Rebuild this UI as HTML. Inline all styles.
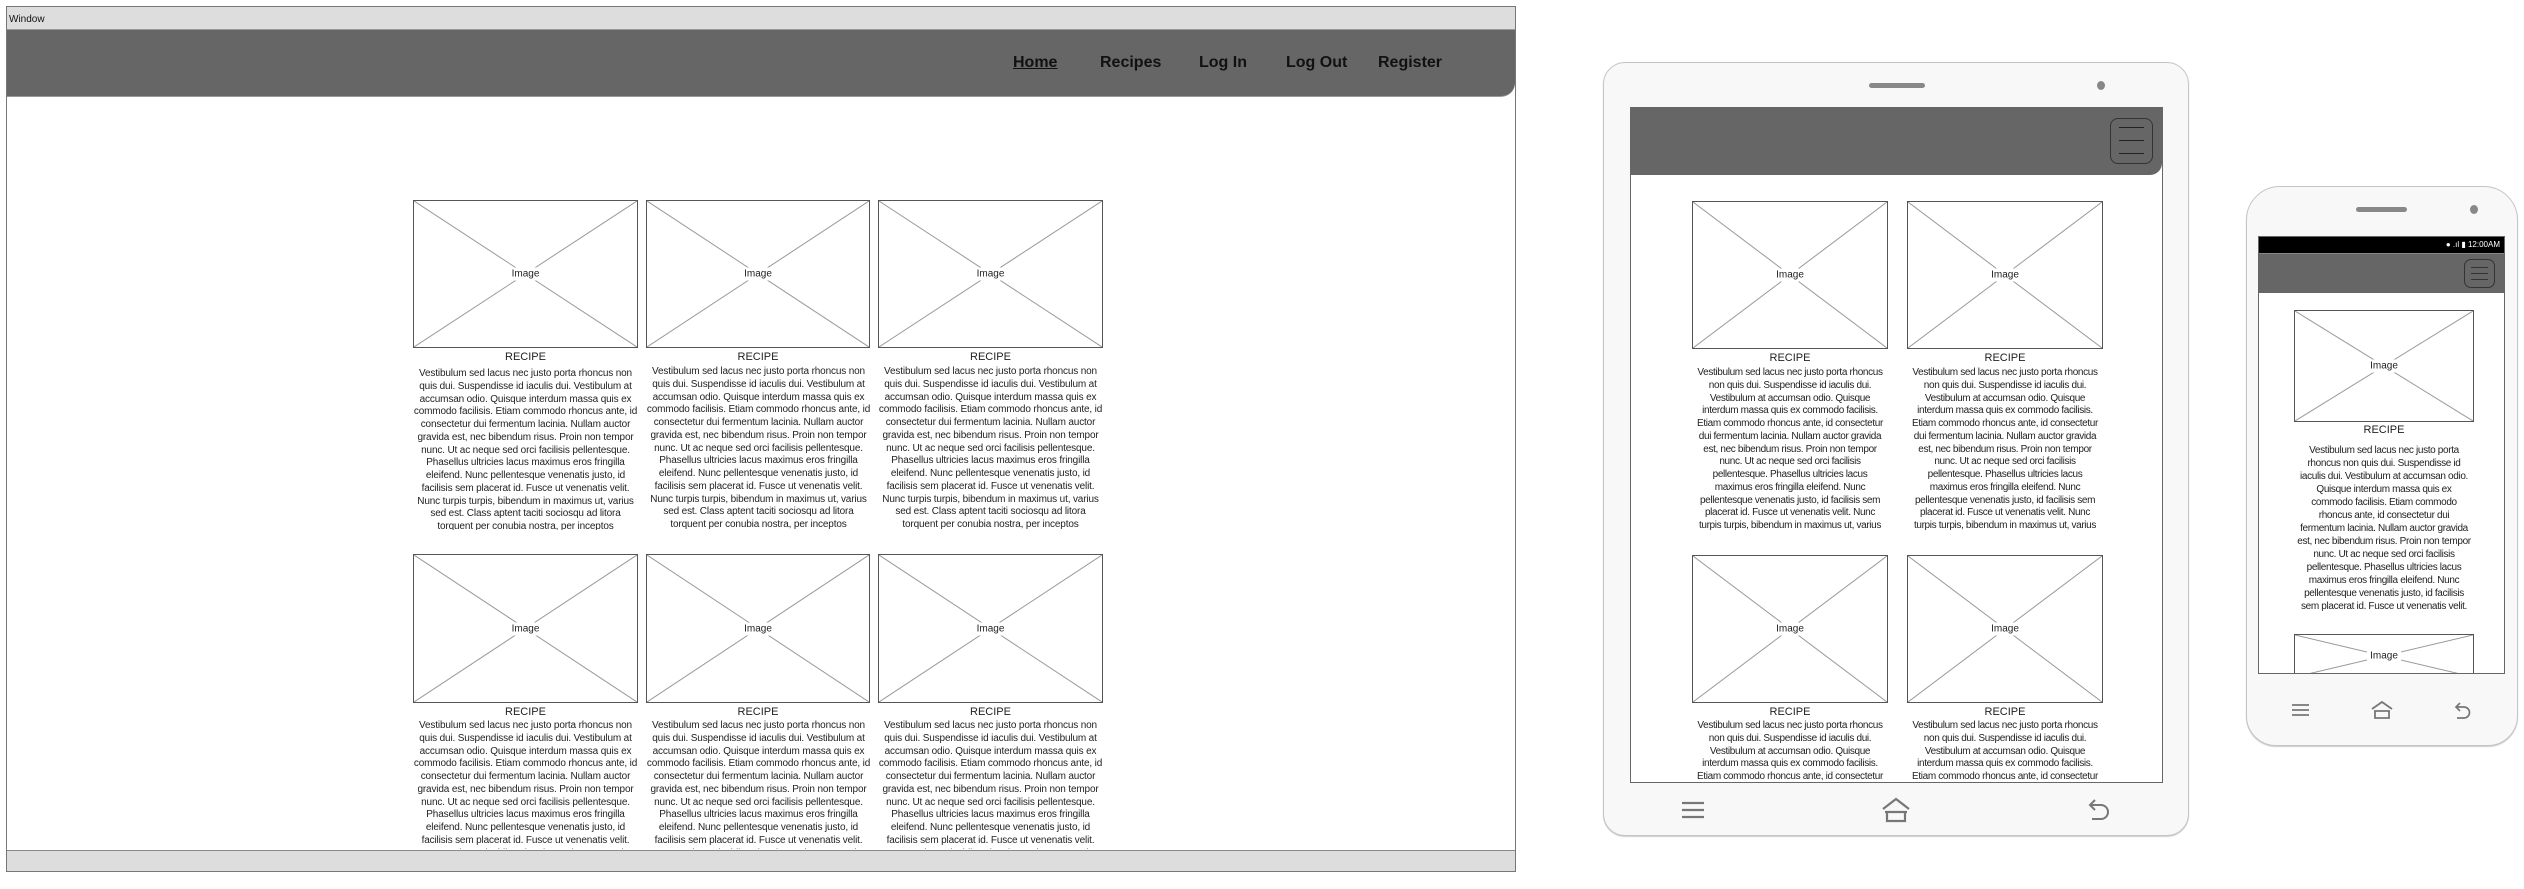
<!DOCTYPE html>
<html><head><meta charset="utf-8"><style>
*{margin:0;padding:0;box-sizing:border-box}
body{width:2524px;height:889px;background:#fff;position:relative;overflow:hidden;font-family:"Liberation Sans",sans-serif;color:#222}
.abs{position:absolute}
.img{position:absolute;border:1px solid #555;background:#fff}
.img svg{position:absolute;left:0;top:0;width:100%;height:100%}
.img span{position:absolute;left:50%;top:50%;transform:translate(-50%,-50%);background:#fff;font-size:10px;padding:1px 3px;color:#222}
.rt{position:absolute;text-align:center;font-size:11px;color:#222}
.tx{position:absolute;text-align:center;font-size:10px;line-height:12.75px;white-space:nowrap;overflow:hidden;color:#222;letter-spacing:-0.15px}
.nav a{position:absolute;top:54px;font-weight:bold;font-size:16px;color:#111;text-decoration:none}
.ham{position:absolute;border:1px solid #333;border-radius:8px}
.ham i{position:absolute;left:20%;right:20%;height:1px;background:#222}
</style></head><body>

<!-- DESKTOP WINDOW -->
<div class="abs" style="left:6px;top:6px;width:1510px;height:866px;border:1px solid #777;background:#fff;overflow:hidden">
  <div class="abs" style="left:0;top:0;width:100%;height:23px;background:#ddd;border-bottom:1px solid #999"></div>
  <div class="abs" style="left:2px;top:7px;font-size:10px;color:#111">Window</div>
  <div class="abs" style="left:0;top:23px;width:100%;height:67px;background:#666;border-bottom-right-radius:14px;border-bottom:1px solid #999"></div>
  <div class="abs" style="left:0;top:843px;width:100%;height:22px;background:#ddd;border-top:1px solid #888"></div>
</div>
<div class="nav">
<a style="left:1013px;text-decoration:underline">Home</a>
<a style="left:1100px">Recipes</a>
<a style="left:1199px">Log In</a>
<a style="left:1286px">Log Out</a>
<a style="left:1378px">Register</a>
</div>

<!-- desktop cards row 1 -->
<div class="img" style="left:413px;top:200px;width:225px;height:148px"><svg viewBox="0 0 100 100" preserveAspectRatio="none"><path d="M0 0L100 100M100 0L0 100" stroke="#999" vector-effect="non-scaling-stroke"/></svg><span>Image</span></div>
<div class="img" style="left:646px;top:200px;width:224px;height:148px"><svg viewBox="0 0 100 100" preserveAspectRatio="none"><path d="M0 0L100 100M100 0L0 100" stroke="#999" vector-effect="non-scaling-stroke"/></svg><span>Image</span></div>
<div class="img" style="left:878px;top:200px;width:225px;height:148px"><svg viewBox="0 0 100 100" preserveAspectRatio="none"><path d="M0 0L100 100M100 0L0 100" stroke="#999" vector-effect="non-scaling-stroke"/></svg><span>Image</span></div>
<div class="rt" style="left:413px;top:351px;width:225px">RECIPE</div>
<div class="rt" style="left:646px;top:351px;width:224px">RECIPE</div>
<div class="rt" style="left:878px;top:351px;width:225px">RECIPE</div>

<div class="tx" style="left:408px;top:368px;width:235px;height:162px">Vestibulum sed lacus nec justo porta rhoncus non<br>quis dui. Suspendisse id iaculis dui. Vestibulum at<br>accumsan odio. Quisque interdum massa quis ex<br>commodo facilisis. Etiam commodo rhoncus ante, id<br>consectetur dui fermentum lacinia. Nullam auctor<br>gravida est, nec bibendum risus. Proin non tempor<br>nunc. Ut ac neque sed orci facilisis pellentesque.<br>Phasellus ultricies lacus maximus eros fringilla<br>eleifend. Nunc pellentesque venenatis justo, id<br>facilisis sem placerat id. Fusce ut venenatis velit.<br>Nunc turpis turpis, bibendum in maximus ut, varius<br>sed est. Class aptent taciti sociosqu ad litora<br>torquent per conubia nostra, per inceptos</div>
<div class="tx" style="left:641px;top:366px;width:235px;height:166px">Vestibulum sed lacus nec justo porta rhoncus non<br>quis dui. Suspendisse id iaculis dui. Vestibulum at<br>accumsan odio. Quisque interdum massa quis ex<br>commodo facilisis. Etiam commodo rhoncus ante, id<br>consectetur dui fermentum lacinia. Nullam auctor<br>gravida est, nec bibendum risus. Proin non tempor<br>nunc. Ut ac neque sed orci facilisis pellentesque.<br>Phasellus ultricies lacus maximus eros fringilla<br>eleifend. Nunc pellentesque venenatis justo, id<br>facilisis sem placerat id. Fusce ut venenatis velit.<br>Nunc turpis turpis, bibendum in maximus ut, varius<br>sed est. Class aptent taciti sociosqu ad litora<br>torquent per conubia nostra, per inceptos</div>
<div class="tx" style="left:873px;top:366px;width:235px;height:166px">Vestibulum sed lacus nec justo porta rhoncus non<br>quis dui. Suspendisse id iaculis dui. Vestibulum at<br>accumsan odio. Quisque interdum massa quis ex<br>commodo facilisis. Etiam commodo rhoncus ante, id<br>consectetur dui fermentum lacinia. Nullam auctor<br>gravida est, nec bibendum risus. Proin non tempor<br>nunc. Ut ac neque sed orci facilisis pellentesque.<br>Phasellus ultricies lacus maximus eros fringilla<br>eleifend. Nunc pellentesque venenatis justo, id<br>facilisis sem placerat id. Fusce ut venenatis velit.<br>Nunc turpis turpis, bibendum in maximus ut, varius<br>sed est. Class aptent taciti sociosqu ad litora<br>torquent per conubia nostra, per inceptos</div>

<!-- desktop cards row 2 -->
<div class="img" style="left:413px;top:554px;width:225px;height:149px"><svg viewBox="0 0 100 100" preserveAspectRatio="none"><path d="M0 0L100 100M100 0L0 100" stroke="#999" vector-effect="non-scaling-stroke"/></svg><span>Image</span></div>
<div class="img" style="left:646px;top:554px;width:224px;height:149px"><svg viewBox="0 0 100 100" preserveAspectRatio="none"><path d="M0 0L100 100M100 0L0 100" stroke="#999" vector-effect="non-scaling-stroke"/></svg><span>Image</span></div>
<div class="img" style="left:878px;top:554px;width:225px;height:149px"><svg viewBox="0 0 100 100" preserveAspectRatio="none"><path d="M0 0L100 100M100 0L0 100" stroke="#999" vector-effect="non-scaling-stroke"/></svg><span>Image</span></div>
<div class="rt" style="left:413px;top:706px;width:225px">RECIPE</div>
<div class="rt" style="left:646px;top:706px;width:224px">RECIPE</div>
<div class="rt" style="left:878px;top:706px;width:225px">RECIPE</div>
<div class="tx" style="left:408px;top:720px;width:235px;height:129px">Vestibulum sed lacus nec justo porta rhoncus non<br>quis dui. Suspendisse id iaculis dui. Vestibulum at<br>accumsan odio. Quisque interdum massa quis ex<br>commodo facilisis. Etiam commodo rhoncus ante, id<br>consectetur dui fermentum lacinia. Nullam auctor<br>gravida est, nec bibendum risus. Proin non tempor<br>nunc. Ut ac neque sed orci facilisis pellentesque.<br>Phasellus ultricies lacus maximus eros fringilla<br>eleifend. Nunc pellentesque venenatis justo, id<br>facilisis sem placerat id. Fusce ut venenatis velit.<br>Nunc turpis turpis, bibendum in maximus ut, varius</div>
<div class="tx" style="left:641px;top:720px;width:235px;height:129px">Vestibulum sed lacus nec justo porta rhoncus non<br>quis dui. Suspendisse id iaculis dui. Vestibulum at<br>accumsan odio. Quisque interdum massa quis ex<br>commodo facilisis. Etiam commodo rhoncus ante, id<br>consectetur dui fermentum lacinia. Nullam auctor<br>gravida est, nec bibendum risus. Proin non tempor<br>nunc. Ut ac neque sed orci facilisis pellentesque.<br>Phasellus ultricies lacus maximus eros fringilla<br>eleifend. Nunc pellentesque venenatis justo, id<br>facilisis sem placerat id. Fusce ut venenatis velit.<br>Nunc turpis turpis, bibendum in maximus ut, varius</div>
<div class="tx" style="left:873px;top:720px;width:235px;height:129px">Vestibulum sed lacus nec justo porta rhoncus non<br>quis dui. Suspendisse id iaculis dui. Vestibulum at<br>accumsan odio. Quisque interdum massa quis ex<br>commodo facilisis. Etiam commodo rhoncus ante, id<br>consectetur dui fermentum lacinia. Nullam auctor<br>gravida est, nec bibendum risus. Proin non tempor<br>nunc. Ut ac neque sed orci facilisis pellentesque.<br>Phasellus ultricies lacus maximus eros fringilla<br>eleifend. Nunc pellentesque venenatis justo, id<br>facilisis sem placerat id. Fusce ut venenatis velit.<br>Nunc turpis turpis, bibendum in maximus ut, varius</div>

<!-- TABLET -->
<div class="abs" style="left:1603px;top:62px;width:586px;height:774px;background:#f7f8f7;border:1px solid #c4c4c4;border-radius:22px;box-shadow:0 1px 1px #ccc"></div>
<div class="abs" style="left:1869px;top:83px;width:56px;height:5px;background:#888;border-radius:3px"></div>
<div class="abs" style="left:2097px;top:81px;width:8px;height:9px;background:#888;border-radius:50%"></div>
<div class="abs" style="left:1630px;top:107px;width:533px;height:676px;background:#fff;border:1px solid #666;overflow:hidden">
  <div class="abs" style="left:0;top:0;width:100%;height:67px;background:#666;border-bottom-right-radius:12px"></div>
  <div class="ham" style="left:479px;top:10px;width:43px;height:46px"><i style="top:8px"></i><i style="top:21px"></i><i style="top:34px"></i></div>

  <div class="img" style="left:61px;top:93px;width:196px;height:148px"><svg viewBox="0 0 100 100" preserveAspectRatio="none"><path d="M0 0L100 100M100 0L0 100" stroke="#999" vector-effect="non-scaling-stroke"/></svg><span>Image</span></div>
  <div class="img" style="left:276px;top:93px;width:196px;height:148px"><svg viewBox="0 0 100 100" preserveAspectRatio="none"><path d="M0 0L100 100M100 0L0 100" stroke="#999" vector-effect="non-scaling-stroke"/></svg><span>Image</span></div>
  <div class="rt" style="left:61px;top:244px;width:196px">RECIPE</div>
  <div class="rt" style="left:276px;top:244px;width:196px">RECIPE</div>
  <div class="tx" style="left:54px;top:259px;width:210px;letter-spacing:-0.35px">Vestibulum sed lacus nec justo porta rhoncus<br>non quis dui. Suspendisse id iaculis dui.<br>Vestibulum at accumsan odio. Quisque<br>interdum massa quis ex commodo facilisis.<br>Etiam commodo rhoncus ante, id consectetur<br>dui fermentum lacinia. Nullam auctor gravida<br>est, nec bibendum risus. Proin non tempor<br>nunc. Ut ac neque sed orci facilisis<br>pellentesque. Phasellus ultricies lacus<br>maximus eros fringilla eleifend. Nunc<br>pellentesque venenatis justo, id facilisis sem<br>placerat id. Fusce ut venenatis velit. Nunc<br>turpis turpis, bibendum in maximus ut, varius</div>
  <div class="tx" style="left:269px;top:259px;width:210px;letter-spacing:-0.35px">Vestibulum sed lacus nec justo porta rhoncus<br>non quis dui. Suspendisse id iaculis dui.<br>Vestibulum at accumsan odio. Quisque<br>interdum massa quis ex commodo facilisis.<br>Etiam commodo rhoncus ante, id consectetur<br>dui fermentum lacinia. Nullam auctor gravida<br>est, nec bibendum risus. Proin non tempor<br>nunc. Ut ac neque sed orci facilisis<br>pellentesque. Phasellus ultricies lacus<br>maximus eros fringilla eleifend. Nunc<br>pellentesque venenatis justo, id facilisis sem<br>placerat id. Fusce ut venenatis velit. Nunc<br>turpis turpis, bibendum in maximus ut, varius</div>

  <div class="img" style="left:61px;top:447px;width:196px;height:148px"><svg viewBox="0 0 100 100" preserveAspectRatio="none"><path d="M0 0L100 100M100 0L0 100" stroke="#999" vector-effect="non-scaling-stroke"/></svg><span>Image</span></div>
  <div class="img" style="left:276px;top:447px;width:196px;height:148px"><svg viewBox="0 0 100 100" preserveAspectRatio="none"><path d="M0 0L100 100M100 0L0 100" stroke="#999" vector-effect="non-scaling-stroke"/></svg><span>Image</span></div>
  <div class="rt" style="left:61px;top:598px;width:196px">RECIPE</div>
  <div class="rt" style="left:276px;top:598px;width:196px">RECIPE</div>
  <div class="tx" style="left:54px;top:612px;width:210px;letter-spacing:-0.35px">Vestibulum sed lacus nec justo porta rhoncus<br>non quis dui. Suspendisse id iaculis dui.<br>Vestibulum at accumsan odio. Quisque<br>interdum massa quis ex commodo facilisis.<br>Etiam commodo rhoncus ante, id consectetur<br>dui fermentum lacinia.</div>
  <div class="tx" style="left:269px;top:612px;width:210px;letter-spacing:-0.35px">Vestibulum sed lacus nec justo porta rhoncus<br>non quis dui. Suspendisse id iaculis dui.<br>Vestibulum at accumsan odio. Quisque<br>interdum massa quis ex commodo facilisis.<br>Etiam commodo rhoncus ante, id consectetur<br>dui fermentum lacinia.</div>
</div>
<!-- tablet nav icons -->
<svg class="abs" style="left:1680px;top:798px" width="26" height="24" viewBox="0 0 26 24"><path d="M2 5H24M2 12H24M2 19H24" stroke="#777" stroke-width="2.2"/></svg>
<svg class="abs" style="left:1880px;top:796px" width="32" height="28" viewBox="0 0 32 28"><path d="M3 13L16 3L29 13M5 16H27M7 16V25H25V16" fill="none" stroke="#777" stroke-width="2.2"/></svg>
<svg class="abs" style="left:2086px;top:797px" width="26" height="27" viewBox="0 0 26 27"><path d="M9 3L4 8L9 13M4 8H15A7 7 0 0 1 15 22H6" fill="none" stroke="#777" stroke-width="2"/></svg>

<!-- PHONE -->
<div class="abs" style="left:2246px;top:186px;width:272px;height:560px;background:#f7f8f7;border:1px solid #c4c4c4;border-radius:34px 34px 30px 30px;box-shadow:0 1px 1px #ccc"></div>
<div class="abs" style="left:2356px;top:207px;width:51px;height:5px;background:#888;border-radius:3px"></div>
<div class="abs" style="left:2470px;top:205px;width:8px;height:9px;background:#888;border-radius:50%"></div>
<div class="abs" style="left:2258px;top:236px;width:247px;height:438px;background:#fff;border:1px solid #666;overflow:hidden">
  <div class="abs" style="left:0;top:0;width:100%;height:16px;background:#000"></div>
  <div class="abs" style="right:4px;top:3px;font-size:8px;color:#fff;white-space:nowrap">&#9679; .ıl ▮ 12:00AM</div>
  <div class="abs" style="left:0;top:16px;width:100%;height:40px;background:#666;border-top:1px solid #888"></div>
  <div class="ham" style="left:205px;top:22px;width:31px;height:29px;border-radius:7px"><i style="top:7px;background:#333"></i><i style="top:13px;background:#333"></i><i style="top:19px;background:#333"></i></div>
  <div class="img" style="left:35px;top:73px;width:180px;height:112px"><svg viewBox="0 0 100 100" preserveAspectRatio="none"><path d="M0 0L100 100M100 0L0 100" stroke="#999" vector-effect="non-scaling-stroke"/></svg><span>Image</span></div>
  <div class="rt" style="left:35px;top:187px;width:180px">RECIPE</div>
  <div class="tx" style="left:15px;top:207px;width:220px;line-height:13px;letter-spacing:-0.35px">Vestibulum sed lacus nec justo porta<br>rhoncus non quis dui. Suspendisse id<br>iaculis dui. Vestibulum at accumsan odio.<br>Quisque interdum massa quis ex<br>commodo facilisis. Etiam commodo<br>rhoncus ante, id consectetur dui<br>fermentum lacinia. Nullam auctor gravida<br>est, nec bibendum risus. Proin non tempor<br>nunc. Ut ac neque sed orci facilisis<br>pellentesque. Phasellus ultricies lacus<br>maximus eros fringilla eleifend. Nunc<br>pellentesque venenatis justo, id facilisis<br>sem placerat id. Fusce ut venenatis velit.</div>
  <div class="img" style="left:35px;top:397px;width:180px;height:44px"><svg viewBox="0 0 100 100" preserveAspectRatio="none"><path d="M0 0L100 100M100 0L0 100" stroke="#999" vector-effect="non-scaling-stroke"/></svg><span>Image</span></div>
</div>
<!-- phone nav icons -->
<svg class="abs" style="left:2291px;top:702px" width="19" height="16" viewBox="0 0 19 16"><path d="M1 3H18M1 8H18M1 13H18" stroke="#777" stroke-width="1.8"/></svg>
<svg class="abs" style="left:2370px;top:700px" width="24" height="20" viewBox="0 0 24 20"><path d="M2 9L12 2L22 9M4 11H20M5 11V18H19V11" fill="none" stroke="#777" stroke-width="1.8"/></svg>
<svg class="abs" style="left:2453px;top:701px" width="20" height="20" viewBox="0 0 20 20"><path d="M7 2L3 6L7 10M3 6H11A5.5 5.5 0 0 1 11 17H4" fill="none" stroke="#777" stroke-width="1.7"/></svg>
</body></html>
